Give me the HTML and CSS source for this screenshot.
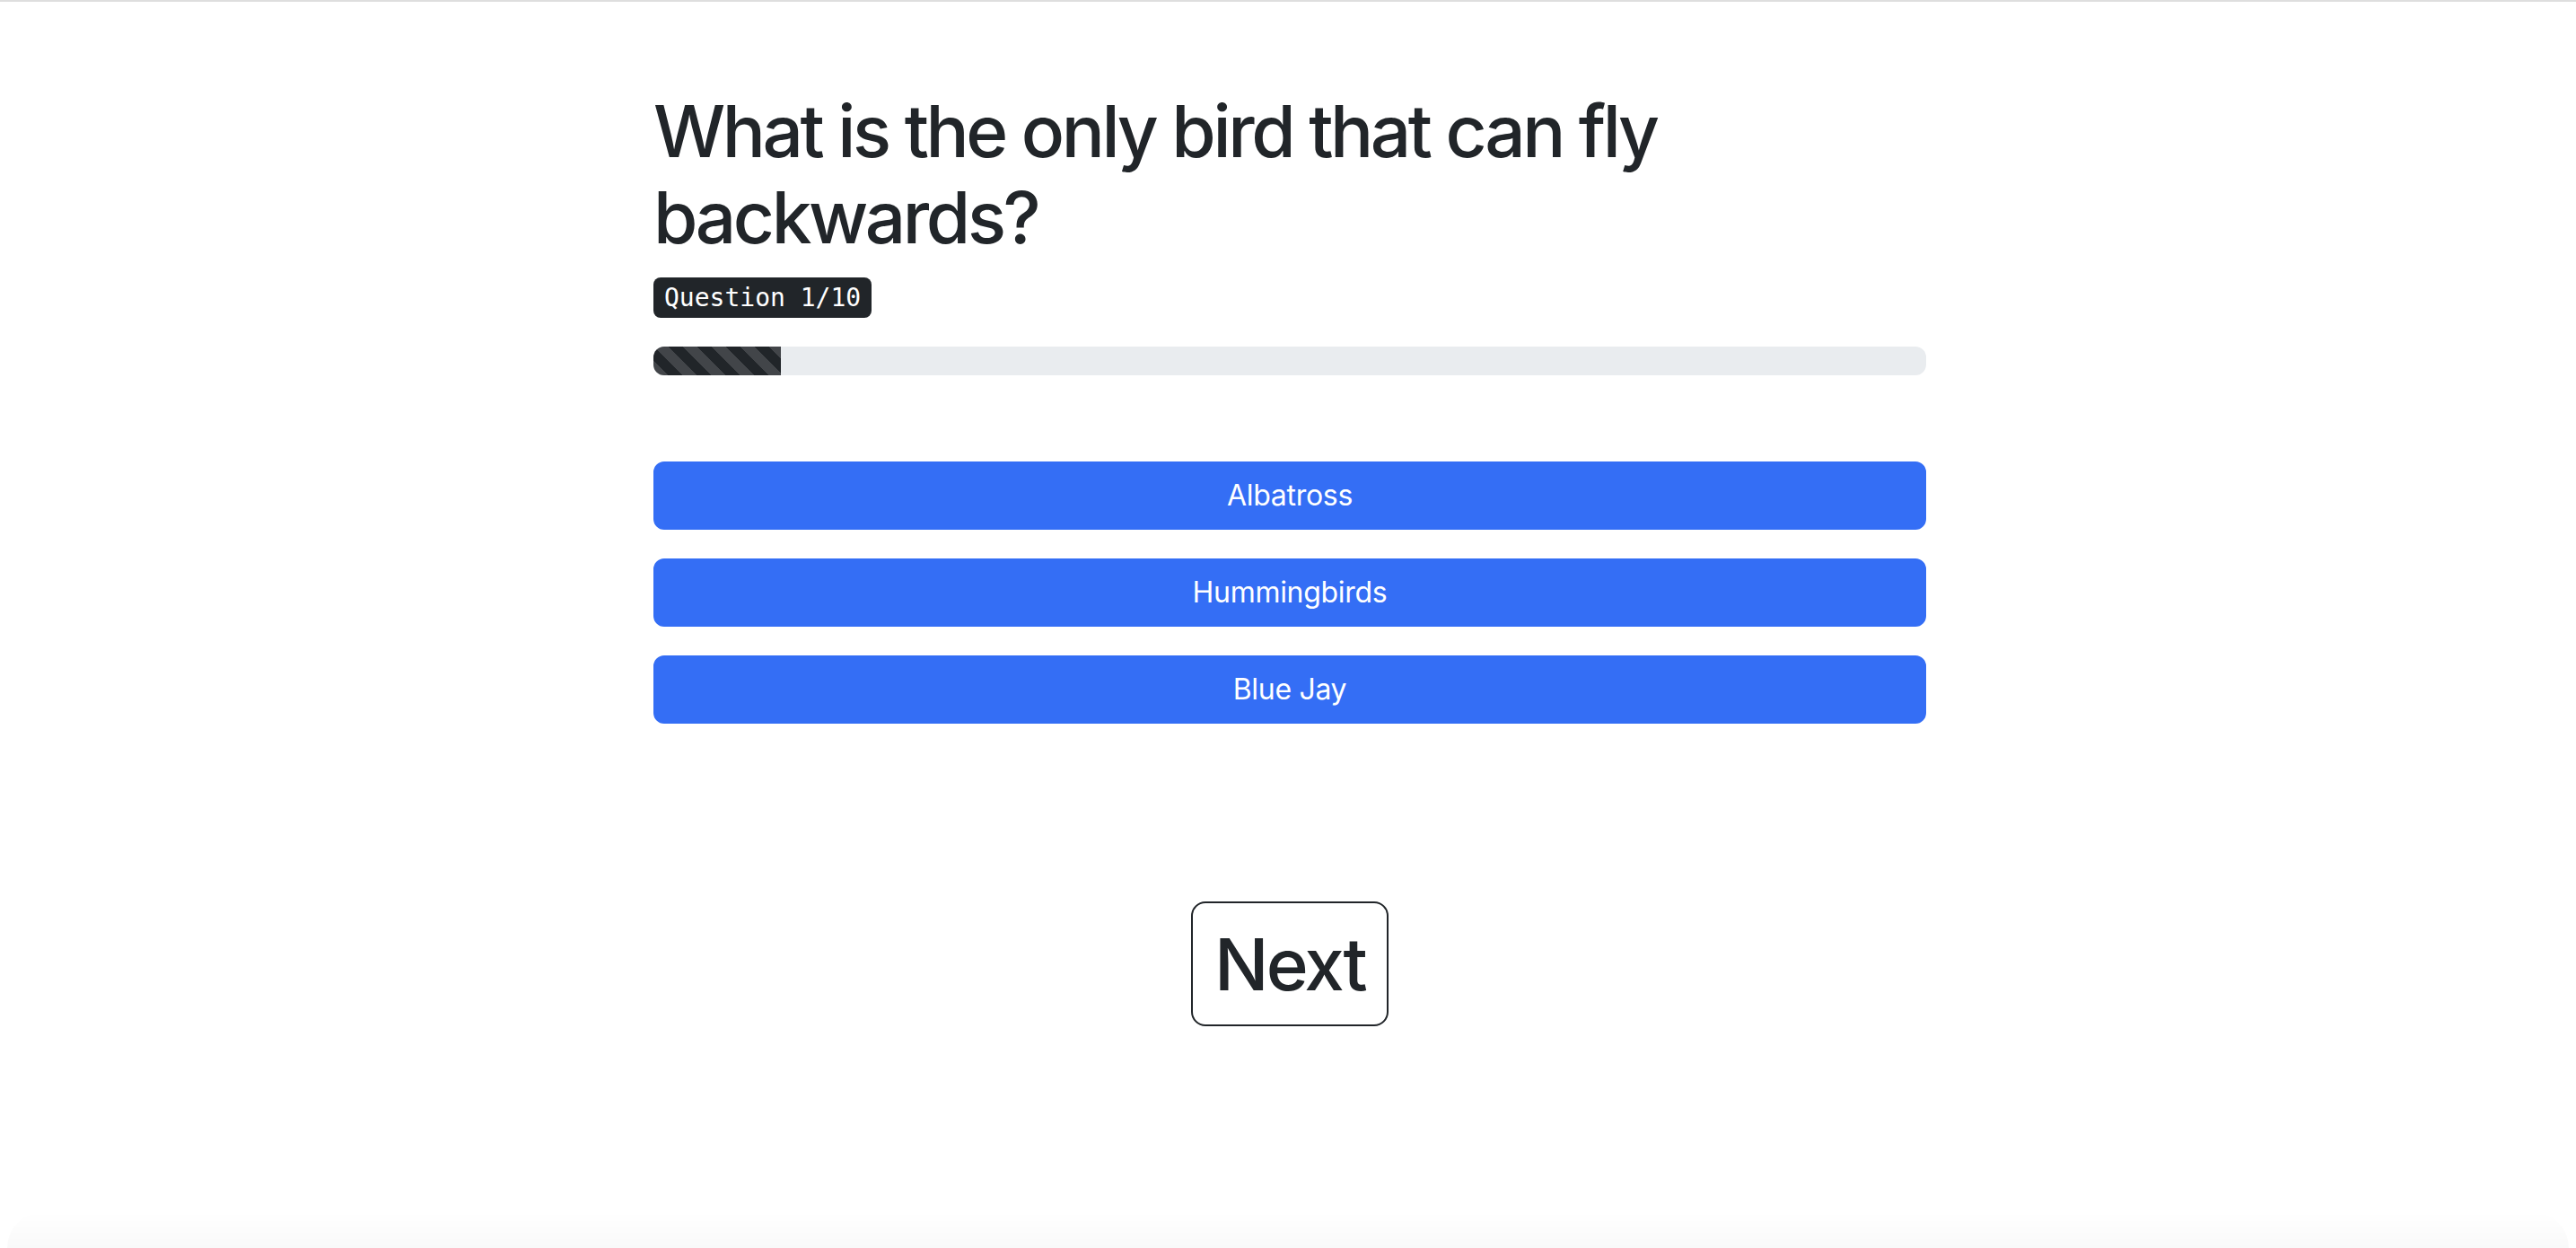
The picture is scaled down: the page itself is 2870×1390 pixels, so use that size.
FILE: index.html
```html
<!DOCTYPE html>
<html lang="en">
<head>
<meta charset="utf-8">
<title>Quiz</title>
<link rel="stylesheet" href="styles.css">
</head>
<body>
<main class="quiz">
  <h1 class="question">What is the only bird that can fly backwards?</h1>
  <div class="counter"><kbd class="counter-kbd">Question 1/10</kbd></div>
  <div class="progress"><div class="progress-bar" style="width: 10%"></div></div>
  <div class="answers">
    <button class="answer">Albatross</button>
    <button class="answer">Hummingbirds</button>
    <button class="answer">Blue Jay</button>
  </div>
  <div class="next-row"><button class="next">Next</button></div>
</main>
<div class="bottom-shade"></div>
</body>
</html>
```
FILE: styles.css
```css
html, body {
  margin: 0;
  padding: 0;
  background: #ffffff;
}
body {
  border-top: 2px solid #dedede;
  font-family: Inter, "Noto Sans", sans-serif;
  color: #212529;
  font-size: 32px;
  line-height: 48px;
  min-height: 1388px;
  box-sizing: border-box;
}
.quiz {
  width: 1418px;
  margin-left: calc(50% - 707px);
  padding-top: 96px;
}
.question {
  font-size: 80px;
  line-height: 96px;
  font-weight: 500;
  margin: 0 0 16px;
  letter-spacing: -3.4px;
  width: 1200px;
}
.counter {
  line-height: 48px;
  margin-bottom: 30px;
}
.counter-kbd {
  font-family: "DejaVu Sans Mono", "Liberation Mono", monospace;
  font-size: 28px;
  background: #212529;
  color: #ffffff;
  padding: 6px 12px;
  border-radius: 8px;
}
.progress {
  height: 32px;
  border-radius: 12px;
  background: #e9ecef;
  overflow: hidden;
  display: flex;
}
.progress-bar {
  background-color: #212529;
  background-image: linear-gradient(45deg, rgba(255,255,255,.15) 25%, transparent 25%, transparent 50%, rgba(255,255,255,.15) 50%, rgba(255,255,255,.15) 75%, transparent 75%, transparent);
  background-size: 32px 32px;
}
.answers {
  margin-top: 96px;
  display: flex;
  flex-direction: column;
  gap: 32px;
}
.answer {
  display: block;
  width: 100%;
  box-sizing: border-box;
  height: 76px;
  padding: 12px 24px;
  font-family: Inter, "Noto Sans", sans-serif;
  font-size: 32px;
  line-height: 48px;
  letter-spacing: -0.3px;
  color: #ffffff;
  background: #346ef5;
  border: 2px solid #346ef5;
  border-radius: 12px;
}
.next-row {
  display: flex;
  justify-content: center;
  margin-top: 198px;
}
.next {
  box-sizing: border-box;
  width: 220px;
  height: 139px;
  padding: 0 10px;
  font-family: Inter, "Noto Sans", sans-serif;
  font-size: 80px;
  font-weight: 500;
  line-height: 129px;
  letter-spacing: -2.8px;
  color: #212529;
  background: #ffffff;
  border: 2px solid #212529;
  border-radius: 16px;
}
.bottom-shade {
  position: fixed;
  left: 8px;
  right: 8px;
  bottom: 0;
  height: 40px;
  border-radius: 40px 40px 0 0;
  background: linear-gradient(to bottom, rgba(0,0,0,0), rgba(0,0,0,0.025));
  pointer-events: none;
}
```
